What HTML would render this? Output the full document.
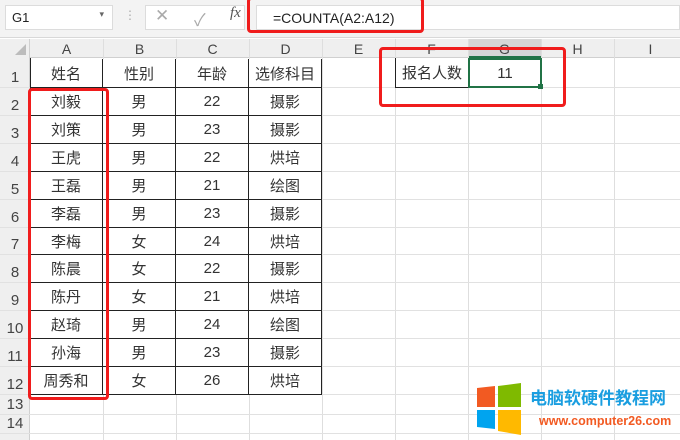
<!DOCTYPE html>
<html><head><meta charset="utf-8"><style>
*{margin:0;padding:0;box-sizing:border-box}
body{width:680px;height:440px;overflow:hidden;background:#fff;position:relative;font-family:"Liberation Sans","Noto Sans CJK SC",sans-serif;color:#333}
.a{position:absolute}
.c{position:absolute;text-align:center;font-size:15px;display:flex;align-items:center;justify-content:center}
.hl{position:absolute;height:1px;background:#e1e1e1}
.vl{position:absolute;width:1px;background:#e1e1e1}
.rb{position:absolute;border:3px solid #f01c1c;border-radius:4px}
</style></head><body>
<div class="a" style="left:0;top:0;width:680px;height:38px;background:#f3f3f3;border-bottom:1px solid #d8d8d8"></div>
<div class="a" style="left:5px;top:5px;width:108px;height:25px;background:#fff;border:1px solid #dcdcdc;font-size:13px;padding:4px 6px;color:#222">G1<span style="position:absolute;right:8px;top:3px;font-size:9px;color:#666">▾</span></div>
<div class="a" style="left:124px;top:8px;font-size:12px;color:#aaa">⋮</div>
<div class="a" style="left:145px;top:5px;width:100px;height:25px;background:#fff;border:1px solid #dcdcdc"></div>
<div class="a" style="left:155px;top:6px;font-size:17px;color:#aaa">✕</div>
<div class="a" style="left:194px;top:6px;font-size:17px;color:#aaa">✓</div>
<div class="a" style="left:230px;top:5px;font-size:15px;font-style:italic;font-family:'Liberation Serif',serif;color:#555">fx</div>
<div class="a" style="left:256px;top:5px;width:424px;height:25px;background:#fff;border:1px solid #dcdcdc;font-size:14px;padding:4px 16px;color:#222">=COUNTA(A2:A12)</div>
<div class="rb" style="left:247px;top:-3px;width:177px;height:36px"></div>
<div class="a" style="left:0;top:39px;width:680px;height:19px;background:#efefef;border-bottom:1px solid #d0d0d0"></div>
<div class="a" style="left:0;top:39px;width:30px;height:401px;background:#efefef;border-right:1px solid #d0d0d0"></div>
<div class="a" style="left:15px;top:44px;width:0;height:0;border-left:11px solid transparent;border-bottom:11px solid #bcbcbc"></div>
<div class="a" style="left:468px;top:39px;width:73px;height:19px;background:#d6d6d6;border-bottom:2px solid #217346"></div>
<div id="cols"></div>
<script>
var cols=['A','B','C','D','E','F','G','H','I'];var h='';
for(var i=0;i<9;i++){var x=30+i*73;h+='<div class="c" style="left:'+x+'px;top:39px;width:73px;height:19px;font-size:14px;color:#444">'+cols[i]+'</div><div class="vl" style="left:'+(x+73)+'px;top:39px;height:401px;background:#dedede"></div>';}
var tops=[58,87];for(var r=2;r<=12;r++)tops.push(Math.round(87+(r-1)*27.9));tops.push(414,433);
for(var r=0;r<14;r++){var t=tops[r],b=tops[r+1];h+='<div class="c" style="left:0;top:'+t+'px;width:30px;height:'+(b-t)+'px;font-size:15px;color:#444;align-items:flex-end;padding-bottom:1px">'+(r+1)+'</div><div class="hl" style="left:0;top:'+b+'px;width:680px"></div>';}
var d=[['姓名','性别','年龄','选修科目'],['刘毅','男','22','摄影'],['刘策','男','23','摄影'],['王虎','男','22','烘培'],['王磊','男','21','绘图'],['李磊','男','23','摄影'],['李梅','女','24','烘培'],['陈晨','女','22','摄影'],['陈丹','女','21','烘培'],['赵琦','男','24','绘图'],['孙海','男','23','摄影'],['周秀和','女','26','烘培']];
for(var r=0;r<12;r++){var t=tops[r],b=tops[r+1];for(var c=0;c<4;c++){h+='<div class="c" style="left:'+(30+c*73)+'px;top:'+(t+1)+'px;width:73px;height:'+(b-t)+'px;border-right:1px solid #222;border-bottom:1px solid #222;background:#fff">'+d[r][c]+'</div>';}}
h+='<div class="c" style="left:395px;top:58px;width:73px;height:30px;border-left:1px solid #222;border-bottom:1px solid #222;background:#fff">报名人数</div>';
h+='<div class="c" style="left:468px;top:58px;width:74px;height:30px;border:2px solid #217346;background:#fff">11</div><div class="a" style="left:538px;top:84px;width:5px;height:5px;background:#217346"></div>';
document.getElementById('cols').innerHTML=h;
</script>
<div class="a" style="left:30px;top:58px;width:1px;height:337px;background:#222"></div>
<div class="rb" style="left:28px;top:88px;width:81px;height:312px"></div>
<div class="rb" style="left:379px;top:47px;width:187px;height:60px"></div>
<svg class="a" style="left:475px;top:383px" width="48" height="52" viewBox="0 0 48 52">
<polygon points="2,5 20,3 20,24 2,24" fill="#f25a22"/>
<polygon points="23,3 46,0 46,24 23,24" fill="#7fba00"/>
<polygon points="2,27 20,27 20,46 2,44" fill="#00a4ef"/>
<polygon points="23,27 46,27 46,52 23,48" fill="#ffb900"/>
</svg>
<div class="a" style="left:530px;top:386px;font-size:17px;font-weight:bold;color:#1a9ee0;font-family:'Noto Sans CJK SC',sans-serif;line-height:22px;white-space:nowrap">电脑软硬件教程网</div>
<div class="a" style="left:539px;top:414px;font-size:12.5px;font-weight:bold;color:#f25a22;white-space:nowrap">www.computer26.com</div>
</body></html>
